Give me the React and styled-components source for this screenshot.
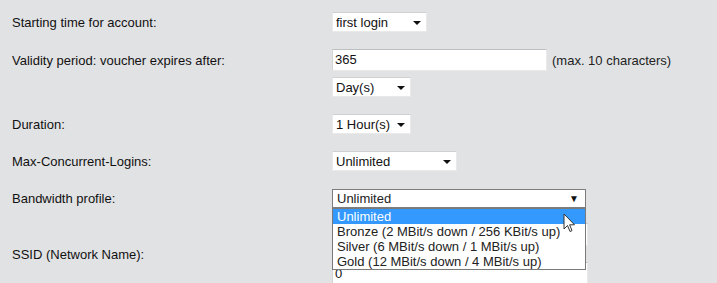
import React from "react";
import styled, { createGlobalStyle } from "styled-components";

const GlobalStyle = createGlobalStyle`
  body {
    margin: 0;
    background: #e1e2e4;
    font-family: "Liberation Sans", Arial, sans-serif;
    font-size: 13px;
    color: #111;
  }
`;

const bandwidthOptions = [
  "Unlimited",
  "Bronze (2 MBit/s down / 256 KBit/s up)",
  "Silver (6 MBit/s down / 1 MBit/s up)",
  "Gold (12 MBit/s down / 4 MBit/s up)",
];

const App = () => {
  return (
    <>
      <GlobalStyle />
      <Page>
        <Row $mt={12}>
          <Label>Starting time for account:</Label>
          <Values>
            <Select $w={95}>first login</Select>
          </Values>
        </Row>

        <Row>
          <Label $self="start" $pt={4}>Validity period: voucher expires after:</Label>
          <Values>
            <Inline>
              <TextInput $w={215}>365</TextInput>
              <Hint>(max. 10 characters)</Hint>
            </Inline>
            <Select $w={79}>Day(s)</Select>
          </Values>
        </Row>

        <Row>
          <Label>Duration:</Label>
          <Values>
            <Select $w={79}>1 Hour(s)</Select>
          </Values>
        </Row>

        <Row>
          <Label>Max-Concurrent-Logins:</Label>
          <Values>
            <Select $w={125}>Unlimited</Select>
          </Values>
        </Row>

        <Row $mt={18}>
          <Label>Bandwidth profile:</Label>
          <Values>
            <OpenSelect>
              Unlimited
              <BigArrow>▼</BigArrow>
              <DropList>
                {bandwidthOptions.map((o, i) => (
                  <Option key={o} $active={i === 0}>{o}</Option>
                ))}
              </DropList>
              <Cursor viewBox="0 0 13 21" width="13" height="21">
                <path
                  d="M1 1 L1 16 L4.5 12.5 L7 18.5 L9 17.6 L6.6 11.8 L11.5 11.8 Z"
                  fill="#fff"
                  stroke="#333"
                  strokeWidth="1"
                  strokeLinejoin="round"
                />
              </Cursor>
            </OpenSelect>
          </Values>
        </Row>

        <Row $mt={15}>
          <Label>SSID (Network Name):</Label>
          <Values $gap={16}>
            <TextInput $w={256} $h={23}></TextInput>
            <TextInput $w={256} $h={23}>0</TextInput>
          </Values>
        </Row>
      </Page>
    </>
  );
};

const Page = styled.div`
  display: flex;
  flex-direction: column;
`;

const Row = styled.div`
  display: grid;
  grid-template-columns: 332px 1fr;
  align-items: center;
  margin-top: ${p => p.$mt ?? 17}px;
`;

const Label = styled.div`
  padding-left: 12px;
  align-self: ${p => p.$self || "center"};
  padding-top: ${p => p.$pt || 0}px;
  color: #111;
`;

const Values = styled.div`
  display: flex;
  flex-direction: column;
  align-items: flex-start;
  gap: ${p => p.$gap ?? 6}px;
`;

const Inline = styled.div`
  display: flex;
  align-items: center;
  gap: 5px;
`;

const Hint = styled.span`
  color: #222;
`;

const Select = styled.div`
  position: relative;
  box-sizing: border-box;
  width: ${p => p.$w}px;
  height: 20px;
  line-height: 19px;
  padding-left: 3px;
  background: #fff;
  border: 1px solid #e9e9ea;
  border-top-color: #cfd0d2;
  white-space: nowrap;

  &::after {
    content: "";
    position: absolute;
    right: 5px;
    top: 8px;
    border-left: 4px solid transparent;
    border-right: 4px solid transparent;
    border-top: 4px solid #111;
  }
`;

const TextInput = styled.div`
  box-sizing: border-box;
  width: ${p => p.$w}px;
  height: ${p => p.$h ?? 22}px;
  line-height: ${p => (p.$h ?? 22) - 2}px;
  padding-left: 2px;
  background: #fff;
  border: 1px solid #e9e9ea;
  border-top-color: #bdbec0;
  border-left-color: #d4d5d7;
`;

const OpenSelect = styled.div`
  position: relative;
  box-sizing: border-box;
  width: 254px;
  height: 19px;
  line-height: 17px;
  padding-left: 4px;
  background: #fff;
  border: 1px solid #7d7d7d;
  color: #222;
`;

const BigArrow = styled.span`
  position: absolute;
  right: 6px;
  top: 0;
  font-size: 10px;
  color: #111;
`;

const DropList = styled.div`
  position: absolute;
  left: -1px;
  top: 18px;
  width: 254px;
  box-sizing: border-box;
  background: #fff;
  border: 1px solid #7a7a7a;
  z-index: 2;
`;

const Option = styled.div`
  height: 15px;
  line-height: 15px;
  padding-left: 4px;
  white-space: nowrap;
  background: ${p => (p.$active ? "#3399ff" : "#fff")};
  color: ${p => (p.$active ? "#fff" : "#222")};
`;

const Cursor = styled.svg`
  position: absolute;
  left: 230px;
  top: 23px;
  z-index: 3;
`;

export default App;
